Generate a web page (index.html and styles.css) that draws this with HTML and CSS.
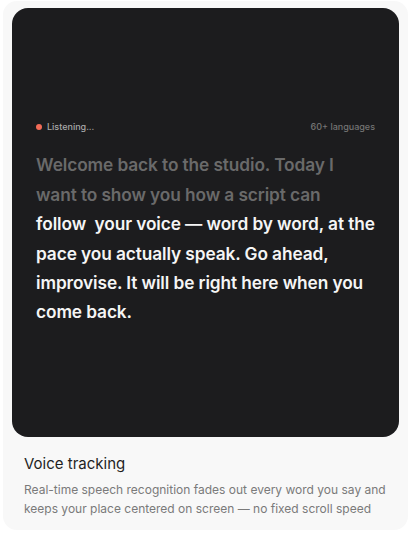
FILE: index.html
```html
<!DOCTYPE html>
<html lang="en">
<head>
<meta charset="utf-8">
<title>Voice tracking</title>
<link rel="stylesheet" href="styles.css">
</head>
<body>
  <article class="card">
    <div class="stage">
      <div class="status">
        <span class="live"><span class="dot"></span>Listening...</span>
        <span class="langs">60+ languages</span>
      </div>
      <div class="script">
        <p class="spoken">Welcome back to the studio. Today I want to show you how a script can</p>
        <p class="upcoming">follow&nbsp; your voice — word by word, at the pace you actually speak. Go ahead, improvise. It will be right here when you come back.</p>
      </div>
    </div>
    <div class="info">
      <h3 class="title">Voice tracking</h3>
      <p class="desc">Real-time speech recognition fades out every word you say and keeps your place centered on screen — no fixed scroll speed</p>
    </div>
  </article>
</body>
</html>
```
FILE: styles.css
```css
* { box-sizing: border-box; }

body {
  margin: 0;
  background: #ffffff;
  font-family: Inter, "Noto Sans", sans-serif;
}

.card {
  width: 405px;
  margin: 1px 0 0 3px;
  padding: 7px 9px 12px;
  background: #f8f8f8;
  border-radius: 14px;
}

.stage {
  height: 429px;
  background: #1c1c1e;
  border-radius: 16px;
  padding: 0 24px;
  display: flex;
  flex-direction: column;
  justify-content: center;
}

.status {
  display: flex;
  justify-content: space-between;
  align-items: center;
  font-size: 9px;
  line-height: 14px;
  font-weight: 500;
  margin-top: 2px;
}

.live {
  display: flex;
  align-items: center;
  gap: 5px;
  color: #a9a9a9;
}

.dot {
  width: 6px;
  height: 6px;
  border-radius: 50%;
  background: #f26b57;
}

.langs { color: #747474; }

.script {
  margin-top: 16px;
  font-size: 17.3px;
  line-height: 29.4px;
  font-weight: 600;
  letter-spacing: -0.1px;
}

.spoken,
.upcoming { margin: 0; }

.spoken { color: #6a6a6a; }
.upcoming { color: #f5f5f5; }

.info { padding: 17px 12px 0; }

.title {
  margin: 0;
  font-size: 15px;
  line-height: 20px;
  font-weight: 400;
  color: #1f1f1f;
}

.desc {
  margin: 6px 0 0;
  font-size: 12px;
  line-height: 19px;
  color: #7a7a7a;
}
```
